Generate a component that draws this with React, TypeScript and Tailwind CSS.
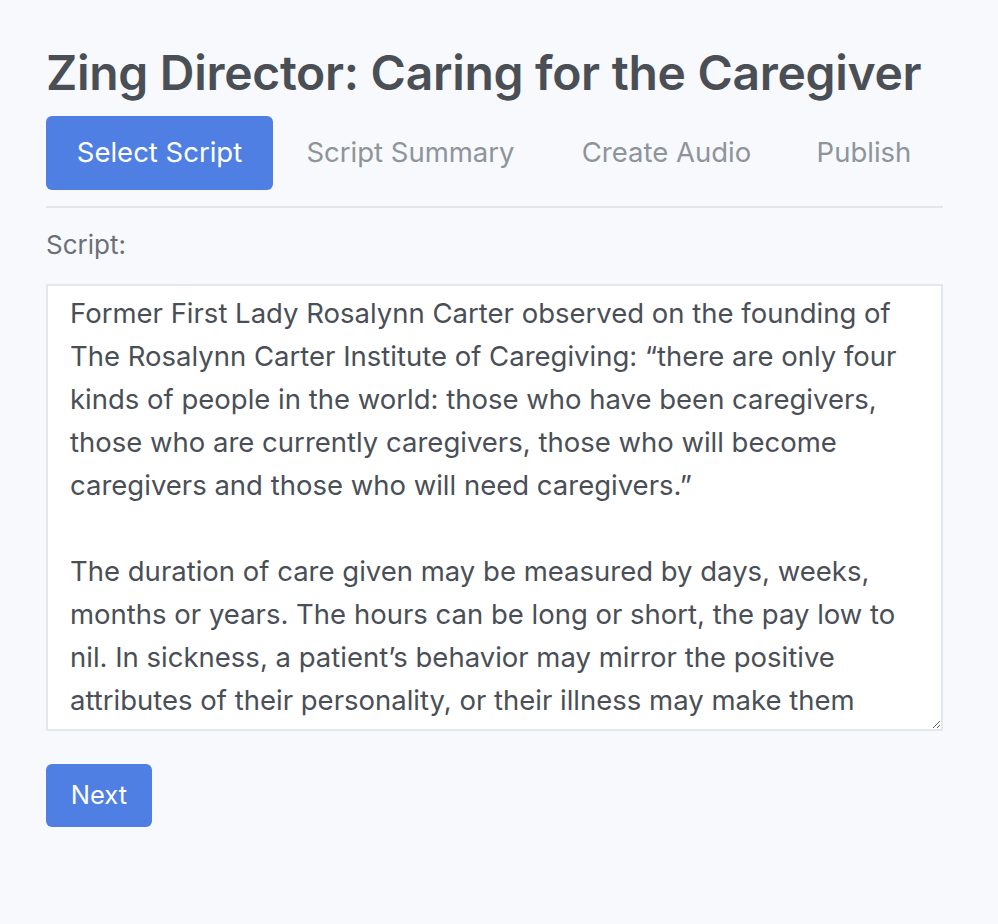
import { useState } from "react";

const tabs = [
  { label: "Select Script", width: "w-[227px]" },
  { label: "Script Summary", width: "w-[275px]" },
  { label: "Create Audio", width: "w-[237px]" },
  { label: "Publish", width: "w-[158px]" },
];

const scriptText = [
  "Former First Lady Rosalynn Carter observed on the founding of",
  "The Rosalynn Carter Institute of Caregiving: “there are only four",
  "kinds of people in the world: those who have been caregivers,",
  "those who are currently caregivers, those who will become",
  "caregivers and those who will need caregivers.”",
  "",
  "The duration of care given may be measured by days, weeks,",
  "months or years. The hours can be long or short, the pay low to",
  "nil. In sickness, a patient’s behavior may mirror the positive",
  "attributes of their personality, or their illness may make them",
  "difficult to care for.",
].join("\n");

export default function App() {
  const [active, setActive] = useState(0);
  const [script, setScript] = useState(scriptText);

  return (
    <div
      className="min-h-[924px] bg-[#f7f9fc] text-[#4a4f56]"
      style={{ fontFamily: "Inter, 'Noto Sans', sans-serif" }}
    >
      <div className="pl-[46px] pt-[43px] w-[943px]">
        {/* Title */}
        <h1 className="text-[48px] leading-[60px] font-semibold text-[#4a4f56] tracking-[-0.3px] whitespace-nowrap">
          Zing Director: Caring for the Caregiver
        </h1>

        {/* Step tabs */}
        <div className="mt-[13px] flex border-b-2 border-[#e2e6ec] pb-[16px]">
          {tabs.map((tab, i) => (
            <button
              key={tab.label}
              onClick={() => setActive(i)}
              className={`h-[74px] ${tab.width} rounded-[6px] text-[27.5px] ${
                active === i ? "bg-[#4f7fe3] text-white" : "text-[#8e949b]"
              }`}
            >
              {tab.label}
            </button>
          ))}
        </div>

        {/* Script */}
        <label className="mt-[20px] block text-[26px] leading-[34px] text-[#6b7078]">Script:</label>
        <textarea
          value={script}
          onChange={(e) => setScript(e.target.value)}
          wrap="off"
          className="mt-[22px] block w-[897px] h-[447px] bg-white border-2 border-[#e3e8ee] pl-[22px] pr-[22px] pt-[6px] text-[27.5px] leading-[43px] text-[#4a4f57] outline-none resize-y overflow-hidden"
        />

        {/* Next */}
        <button className="mt-[33px] h-[63px] w-[106px] rounded-[6px] bg-[#4f7fe3] text-[25.5px] text-white">
          Next
        </button>
      </div>
    </div>
  );
}
